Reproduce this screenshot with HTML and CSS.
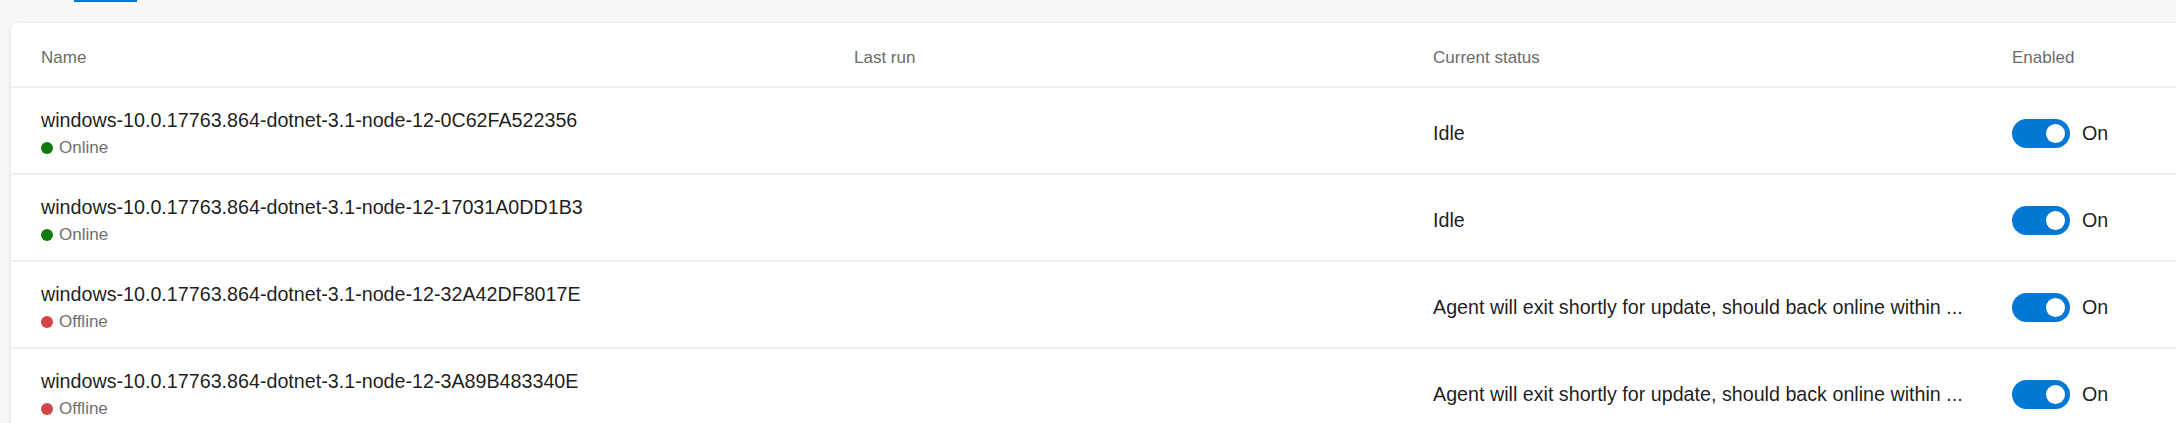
FILE: index.html
```html
<!DOCTYPE html>
<html lang="en">
<head>
<meta charset="utf-8">
<title>Agents</title>
<link rel="stylesheet" href="styles.css">
</head>
<body>
<div class="tabbar"><span class="tab-indicator"></span></div>
<div class="card">
  <div class="row head">
    <div class="cell">Name</div>
    <div class="cell">Last run</div>
    <div class="cell">Current status</div>
    <div class="cell">Enabled</div>
  </div>
  <div class="row">
    <div class="cell name">
      <div class="title">windows-10.0.17763.864-dotnet-3.1-node-12-0C62FA522356</div>
      <div class="state"><span class="dot online"></span>Online</div>
    </div>
    <div class="cell"></div>
    <div class="cell status">Idle</div>
    <div class="cell enabled"><span class="toggle"><span class="knob"></span></span><span class="on">On</span></div>
  </div>
  <div class="row">
    <div class="cell name">
      <div class="title">windows-10.0.17763.864-dotnet-3.1-node-12-17031A0DD1B3</div>
      <div class="state"><span class="dot online"></span>Online</div>
    </div>
    <div class="cell"></div>
    <div class="cell status">Idle</div>
    <div class="cell enabled"><span class="toggle"><span class="knob"></span></span><span class="on">On</span></div>
  </div>
  <div class="row">
    <div class="cell name">
      <div class="title">windows-10.0.17763.864-dotnet-3.1-node-12-32A42DF8017E</div>
      <div class="state"><span class="dot offline"></span>Offline</div>
    </div>
    <div class="cell"></div>
    <div class="cell status">Agent will exit shortly for update, should back online within ...</div>
    <div class="cell enabled"><span class="toggle"><span class="knob"></span></span><span class="on">On</span></div>
  </div>
  <div class="row">
    <div class="cell name">
      <div class="title">windows-10.0.17763.864-dotnet-3.1-node-12-3A89B483340E</div>
      <div class="state"><span class="dot offline"></span>Offline</div>
    </div>
    <div class="cell"></div>
    <div class="cell status">Agent will exit shortly for update, should back online within ...</div>
    <div class="cell enabled"><span class="toggle"><span class="knob"></span></span><span class="on">On</span></div>
  </div>
</div>
</body>
</html>
```
FILE: styles.css
```css
html, body {
  margin: 0;
  padding: 0;
  height: 423px;
  overflow: hidden;
  background: #f8f8f8;
  font-family: "Liberation Sans", Arial, sans-serif;
  color: rgba(0, 0, 0, 0.9);
}

.tabbar {
  height: 23px;
  display: flex;
  align-items: flex-start;
  padding-left: 74px;
}

.tab-indicator {
  display: block;
  width: 63px;
  height: 2px;
  background: #0078d4;
}

.card {
  margin-left: 11px;
  width: 2240px;
  background: #ffffff;
  border-radius: 6px 0 0 0;
  box-shadow: 0 2px 5px rgba(0, 0, 0, 0.10), 0 0 1px rgba(0, 0, 0, 0.10);
}

.row {
  display: grid;
  grid-template-columns: 813px 579px 579px 1fr;
  padding-left: 30px;
  height: 85px;
  border-bottom: 2px solid #efefef;
  align-items: center;
}

.row.head {
  font-size: 17px;
  color: #6b6b6b;
  padding-top: 6px;
  box-sizing: border-box;
  height: 65px;
}

.cell {
  min-width: 0;
}

.name {
  display: flex;
  flex-direction: column;
  gap: 5px;
  padding-top: 5px;
}

.title {
  font-size: 19.7px;
  line-height: 24px;
  white-space: nowrap;
}

.state {
  display: flex;
  align-items: center;
  font-size: 17px;
  line-height: 22px;
  color: #6f6f6f;
}

.dot {
  width: 12px;
  height: 12px;
  border-radius: 50%;
  margin-right: 6px;
  flex: none;
}

.dot.online { background: #107c10; }
.dot.offline { background: #d64545; }

.status {
  font-size: 19.7px;
  white-space: nowrap;
  overflow: hidden;
  text-overflow: ellipsis;
  padding-right: 34px;
  padding-top: 6px;
}

.enabled {
  display: flex;
  align-items: center;
  gap: 12px;
  padding-top: 5px;
}

.toggle {
  box-sizing: border-box;
  width: 58px;
  height: 29px;
  border-radius: 15px;
  background: #0078d4;
  display: flex;
  align-items: center;
  justify-content: flex-end;
  padding-right: 5px;
}

.knob {
  width: 19px;
  height: 19px;
  border-radius: 50%;
  background: #ffffff;
}

.on {
  font-size: 19.7px;
}
```
